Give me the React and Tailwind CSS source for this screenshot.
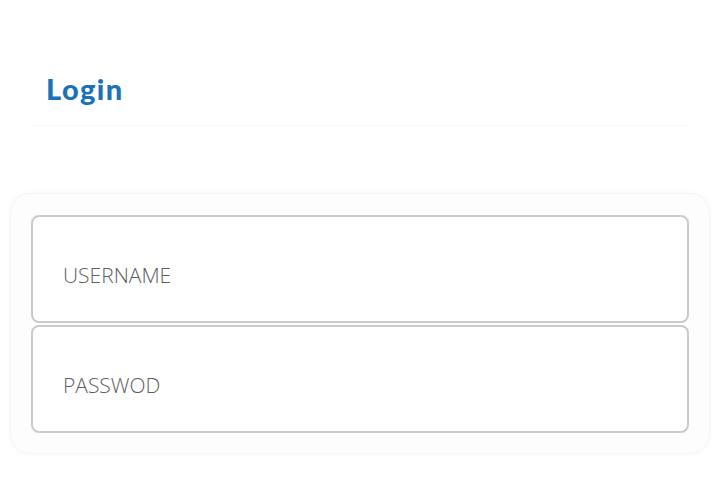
export default function App() {
  return (
    <div className="w-[720px] h-[480px] bg-white overflow-hidden" style={{ fontFamily: '"Open Sans", sans-serif' }}>
      <div className="pt-[69px] px-[30px]">
        <div className="pl-[16px] pb-[16px] border-b border-[#f7f7f7]">
          <h1 className="text-[29px] leading-[40px] font-black text-[#1c72b8] tracking-[1.4px]" style={{ fontFamily: 'Lato, sans-serif' }}>Login</h1>
        </div>
      </div>
      <div className="mt-[67px] mx-[10px] rounded-[20px] bg-[#fdfdfd] border border-[#f5f5f5] shadow-[0_0_6px_rgba(0,0,0,0.03)] px-[20px] pt-[21px] pb-[20px] flex flex-col gap-[2px]">
        <div className="h-[108px] rounded-[8px] border-2 border-[#cacaca] bg-white flex items-center pl-[30px] pt-[13px]">
          <span className="text-[21px] text-[#5e5e5e] font-light">USERNAME</span>
        </div>
        <div className="h-[108px] rounded-[8px] border-2 border-[#cacaca] bg-white flex items-center pl-[30px] pt-[13px]">
          <span className="text-[21px] text-[#5e5e5e] font-light">PASSWOD</span>
        </div>
      </div>
    </div>
  );
}
